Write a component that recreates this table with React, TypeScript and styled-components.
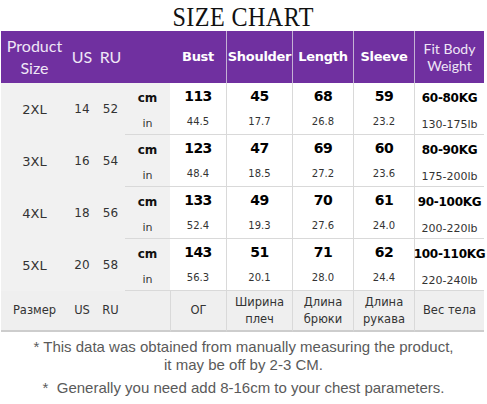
import styled, { createGlobalStyle } from 'styled-components';

const GlobalStyle = createGlobalStyle`
  html, body {
    margin: 0;
    padding: 0;
    background: #ffffff;
  }
  body {
    width: 487px;
    height: 404px;
    overflow: hidden;
    font-family: "DejaVu Sans", Verdana, sans-serif;
  }
`;

const COLS = '67px 28px 29px 45px 56px 66px 61px 61px 70px';

type SizeRow = {
  size: string;
  us: number;
  ru: number;
  cm: string[];
  inch: string[];
  kg: string;
  lb: string;
};

const rows: SizeRow[] = [
  { size: '2XL', us: 14, ru: 52, cm: ['113', '45', '68', '59'], inch: ['44.5', '17.7', '26.8', '23.2'], kg: '60-80KG', lb: '130-175lb' },
  { size: '3XL', us: 16, ru: 54, cm: ['123', '47', '69', '60'], inch: ['48.4', '18.5', '27.2', '23.6'], kg: '80-90KG', lb: '175-200lb' },
  { size: '4XL', us: 18, ru: 56, cm: ['133', '49', '70', '61'], inch: ['52.4', '19.3', '27.6', '24.0'], kg: '90-100KG', lb: '200-220lb' },
  { size: '5XL', us: 20, ru: 58, cm: ['143', '51', '71', '62'], inch: ['56.3', '20.1', '28.0', '24.4'], kg: '100-110KG', lb: '220-240lb' },
];

const App = () => {
  return (
    <>
      <GlobalStyle />
      <Page>
        <Title>
          <span>SIZE CHART</span>
        </Title>
        <Chart>
          <HeadCell $light>
            Product
            <br />
            Size
          </HeadCell>
          <HeadCell $light>US</HeadCell>
          <HeadCell $light>RU</HeadCell>
          <HeadCell />
          <HeadCell>Bust</HeadCell>
          <HeadCell $line>Shoulder</HeadCell>
          <HeadCell $line>Length</HeadCell>
          <HeadCell $line>Sleeve</HeadCell>
          <HeadCell $line $light $small>
            Fit Body
            <br />
            Weight
          </HeadCell>

          {rows.map((r) => [
            <SizeCell key={r.size + 's'}>{r.size}</SizeCell>,
            <CodeCell key={r.size + 'u'}>{r.us}</CodeCell>,
            <CodeCell key={r.size + 'r'}>{r.ru}</CodeCell>,
            <UnitCell key={r.size + 'cm'} $bold>
              cm
            </UnitCell>,
            ...r.cm.map((v, i) => (
              <ValueCell key={r.size + 'c' + i} $line={i > 0} $bold>
                {v}
              </ValueCell>
            )),
            <WeightCell key={r.size + 'kg'} $bold>
              {r.kg}
            </WeightCell>,
            <UnitCell key={r.size + 'in'} $last>
              in
            </UnitCell>,
            ...r.inch.map((v, i) => (
              <ValueCell key={r.size + 'i' + i} $line={i > 0} $last>
                {v}
              </ValueCell>
            )),
            <WeightCell key={r.size + 'lb'} $last>
              {r.lb}
            </WeightCell>,
          ])}

          <FootCell>Размер</FootCell>
          <FootCell>US</FootCell>
          <FootCell>RU</FootCell>
          <FootCell />
          <FootCell $line>ОГ</FootCell>
          <FootCell $line>
            Ширина
            <br />
            плеч
          </FootCell>
          <FootCell $line>
            Длина
            <br />
            брюки
          </FootCell>
          <FootCell $line>
            Длина
            <br />
            рукава
          </FootCell>
          <FootCell $line>Вес тела</FootCell>
        </Chart>
        <Notes>
          <p>
            * This data was obtained from manually measuring the product,
            <br />
            it may be off by 2-3 CM.
          </p>
          <p className="gap">* &nbsp;Generally you need add 8-16cm to your chest parameters.</p>
        </Notes>
      </Page>
    </>
  );
};

export default App;

const Page = styled.div`
  width: 487px;
  display: flex;
  flex-direction: column;
`;

const Title = styled.div`
  height: 31px;
  display: flex;
  justify-content: center;
  line-height: 34px;
  font-family: "Liberation Serif", "Times New Roman", serif;
  font-size: 28px;
  color: #111111;

  span {
    display: inline-block;
    letter-spacing: 0.5px;
    transform: scaleX(0.86);
  }
`;

const Chart = styled.div`
  display: grid;
  grid-template-columns: ${COLS};
  grid-template-rows: 52px repeat(8, 26px) 41px;
  margin-left: 1px;
  width: 483px;
`;

const HeadCell = styled.div<{ $line?: boolean; $light?: boolean; $small?: boolean }>`
  background: #7030a0;
  display: flex;
  align-items: center;
  justify-content: center;
  text-align: center;
  white-space: nowrap;
  border-left: ${(p) => (p.$line ? '1px solid #c4b2d4' : 'none')};
  color: ${(p) => (p.$light ? '#efe6f6' : '#ffffff')};
  font-family: ${(p) => (p.$light ? '"Lato", "Open Sans", sans-serif' : '"DejaVu Sans", Verdana, sans-serif')};
  font-weight: ${(p) => (p.$light ? 400 : 700)};
  font-size: ${(p) => (p.$light ? (p.$small ? '14px' : '16px') : '13px')};
  line-height: ${(p) => (p.$small ? '17px' : '22px')};
  letter-spacing: ${(p) => (p.$light ? '0' : '-0.3px')};
`;

const SizeCell = styled.div`
  grid-row: span 2;
  background: #f1f1f1;
  display: flex;
  align-items: center;
  justify-content: center;
  font-size: 13px;
  color: #333333;
`;

const CodeCell = styled(SizeCell)`
  font-size: 12px;
`;

const UnitCell = styled.div<{ $bold?: boolean; $last?: boolean }>`
  box-sizing: border-box;
  background: #f1f1f1;
  display: flex;
  align-items: center;
  justify-content: center;
  padding-top: ${(p) => (p.$last ? '4px' : '3px')};
  border-bottom: ${(p) => (p.$last ? '1px solid #d9d9d9' : 'none')};
  font-size: ${(p) => (p.$bold ? '12px' : '11px')};
  font-weight: ${(p) => (p.$bold ? 700 : 400)};
  color: ${(p) => (p.$bold ? '#111111' : '#333333')};
`;

const ValueCell = styled.div<{ $bold?: boolean; $last?: boolean; $line?: boolean }>`
  box-sizing: border-box;
  background: #ffffff;
  display: flex;
  align-items: center;
  justify-content: center;
  white-space: nowrap;
  border-left: ${(p) => (p.$line ? '1px solid #d9d9d9' : 'none')};
  border-bottom: ${(p) => (p.$last ? '1px solid #d9d9d9' : 'none')};
  padding-bottom: ${(p) => (p.$bold ? '1px' : '0')};
  font-size: ${(p) => (p.$bold ? '14px' : '10px')};
  font-weight: ${(p) => (p.$bold ? 700 : 400)};
  letter-spacing: ${(p) => (p.$bold ? '-0.6px' : '0')};
  color: ${(p) => (p.$bold ? '#000000' : '#333333')};
`;

const WeightCell = styled(ValueCell).attrs({ $line: true })`
  padding-top: ${(p) => (p.$last ? '5px' : '3px')};
  padding-bottom: 0;
  font-size: ${(p) => (p.$bold ? '12px' : '11px')};
  letter-spacing: ${(p) => (p.$bold ? '-0.3px' : '0')};
`;

const FootCell = styled.div<{ $line?: boolean }>`
  box-sizing: border-box;
  background: #efefef;
  display: flex;
  align-items: center;
  justify-content: center;
  text-align: center;
  white-space: nowrap;
  border-left: ${(p) => (p.$line ? '1px solid #d9d9d9' : 'none')};
  border-bottom: 2px solid #cdcdcd;
  font-size: 11.5px;
  line-height: 17px;
  color: #333333;
`;

const Notes = styled.div`
  padding-top: 6px;
  text-align: center;
  font-family: "Liberation Sans", Arial, sans-serif;
  font-size: 15px;
  line-height: 18px;
  color: #5a5a5a;

  p {
    margin: 0;
  }
  .gap {
    margin-top: 5px;
  }
`;
